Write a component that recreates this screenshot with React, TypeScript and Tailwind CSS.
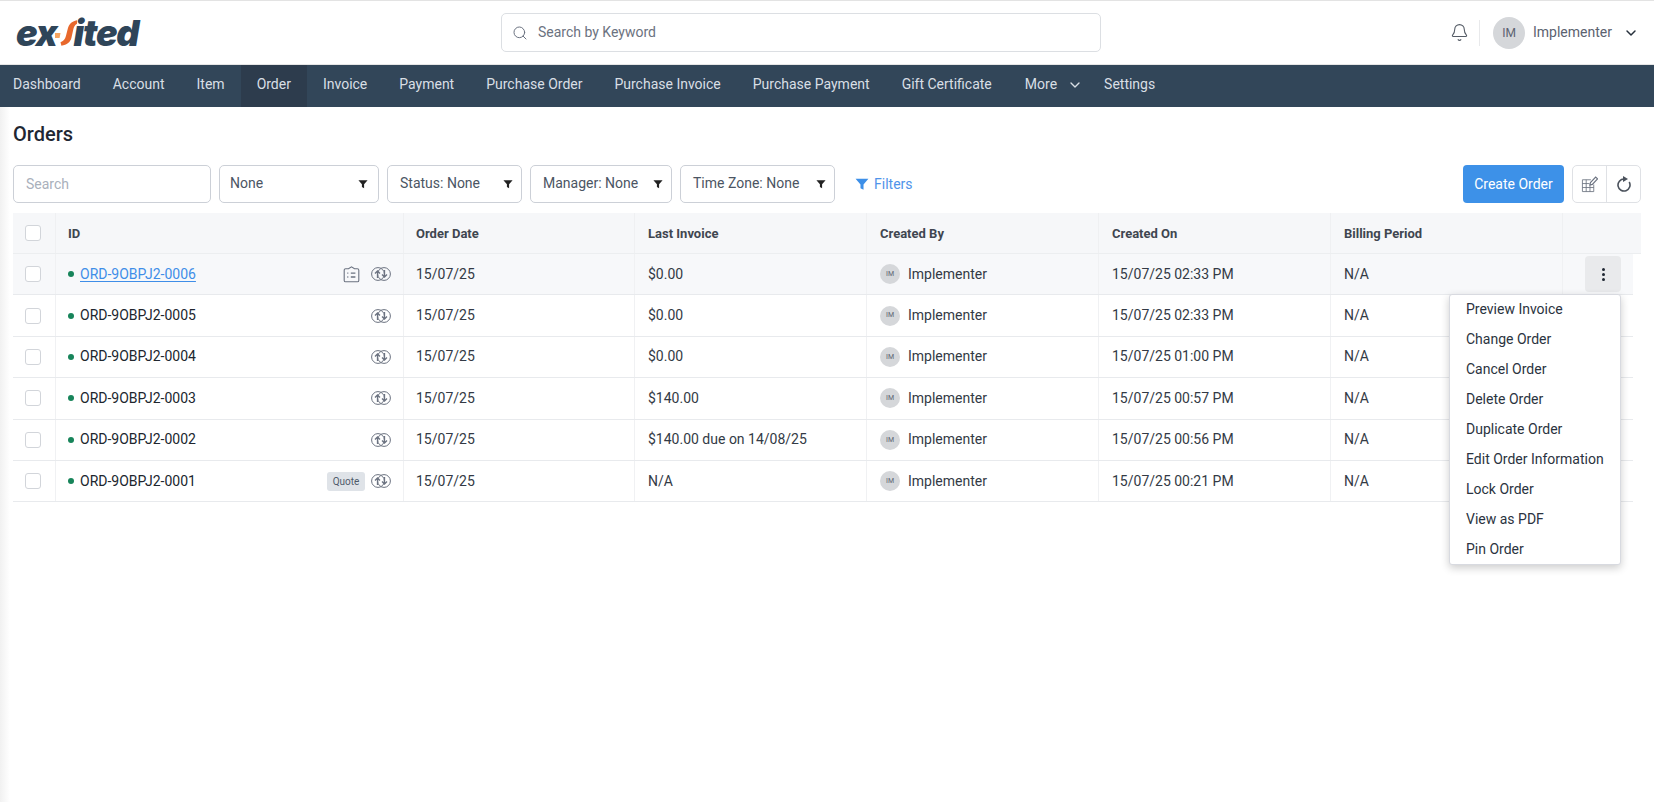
import React from "react";
import { Bell, ChevronDown, Search } from "lucide-react";

const nav = ["Account", "Item"];
const nav2 = ["Invoice", "Payment", "Purchase Order", "Purchase Invoice", "Purchase Payment", "Gift Certificate"];

const rows = [
  { id: "ORD-9OBPJ2-0006", last: "$0.00", on: "15/07/25 02:33 PM", active: true },
  { id: "ORD-9OBPJ2-0005", last: "$0.00", on: "15/07/25 02:33 PM" },
  { id: "ORD-9OBPJ2-0004", last: "$0.00", on: "15/07/25 01:00 PM" },
  { id: "ORD-9OBPJ2-0003", last: "$140.00", on: "15/07/25 00:57 PM" },
  { id: "ORD-9OBPJ2-0002", last: "$140.00 due on 14/08/25", on: "15/07/25 00:56 PM" },
  { id: "ORD-9OBPJ2-0001", last: "N/A", on: "15/07/25 00:21 PM", quote: true },
];

const menu = ["Preview Invoice", "Change Order", "Cancel Order", "Delete Order", "Duplicate Order", "Edit Order Information", "Lock Order", "View as PDF", "Pin Order"];

function Funnel({ className }: { className: string }) {
  return (
    <svg viewBox="0 0 12 12" className={className} fill="currentColor">
      <path d="M0.5 1.5h11L7.3 6.4V11L4.7 9.6V6.4z" />
    </svg>
  );
}

function SyncIcon() {
  return (
    <svg viewBox="0 0 20 16" className="w-[20px] h-[16px] text-[#6b7280]" fill="none" stroke="currentColor" strokeWidth="1">
      <circle cx="7" cy="8" r="6.4" />
      <circle cx="13" cy="8" r="6.4" />
      <path d="M6.500 12V5M4 7.500 6.500 5 9 7.500" strokeWidth="1.300" />
      <path d="M13.500 4V11M11 8.500 13.500 11 16 8.500" strokeWidth="1.300" />
    </svg>
  );
}

function ClipIcon() {
  return (
    <svg viewBox="0 0 17 17" className="w-[17px] h-[17px] text-[#6b7280]" fill="none" stroke="currentColor" strokeWidth="1.1">
      <path d="M5.500 2.800H2.600a1.400 1.400 0 0 0-1.400 1.400v10.200a1.400 1.400 0 0 0 1.400 1.400h11.800a1.400 1.400 0 0 0 1.400-1.400V4.200a1.400 1.400 0 0 0-1.400-1.400h-2.900L8.500 0.800z" />
      <path d="M4.300 7.200h1M4.300 11h1M7.800 7.200h4.600M7.800 11h4.600" strokeWidth="1.3" />
    </svg>
  );
}

function GridEditIcon() {
  return (
    <svg viewBox="0 0 18 18" className="w-[17px] h-[17px] text-[#6b7280]" fill="none" stroke="currentColor" strokeWidth="0.9">
      <path d="M10.500 4H1.500v12.500h12V9M1.500 8h7.500M1.500 12.200h12M5.500 4v12.500M9.500 9v7.500" />
      <path d="M9.500 9.500 10 7l5.500-5.800 2 1.900L12 8.900z" strokeWidth="1.200" />
    </svg>
  );
}

function RefreshIcon() {
  return (
    <svg viewBox="0 0 16 16" className="w-[16px] h-[16px] text-[#4b525c]" fill="none" stroke="currentColor" strokeWidth="1.600">
      <path d="M8 3A6 6 0 1 0 13.200 6" />
      <path d="M7 0 12 3 7 6z" fill="currentColor" stroke="none" />
    </svg>
  );
}

function Logo() {
  return (
    <div className="flex items-center h-[34px] w-[127px] shrink-0 text-[#2f4559] italic font-black text-[36px] leading-none tracking-[-1.2px] [font-family:Inter,'Liberation_Sans',sans-serif]">
      <span>ex</span>
      <svg viewBox="0 0 24 30" className="w-[22px] h-[30px] shrink-0 -ml-[2px] -mr-[3px]">
        <path d="M0 15h6l-1 5.500H0z" fill="#f7a561" />
        <path d="M24 1C18 2 15 6 14 10l-2 8c-1 4-3 6-6 7l1 4c6-1 10-4 11-9l2-9c.5-2 1-4 4-6z" fill="#e8682c" />
      </svg>
      <span>ited</span>
    </div>
  );
}

function Select({ label, w, first }: { label: string; w: string; first?: boolean }) {
  return (
    <div className={`${w} h-[38px] shrink-0 flex items-center justify-between ${first ? "pl-[10px] pr-[10px]" : "pl-[12px] pr-[8px]"} border border-[#ccd0d7] rounded-[5px] text-[14px] text-[#4b5563]`}>
      <span className="-mt-[1px]">{label}</span>
      <Funnel className="w-[10px] h-[10px] text-[#222]" />
    </div>
  );
}

export default function App() {
  return (
    <div className="w-[1654px] h-[802px] overflow-hidden bg-white text-[14px] text-[#333a45] flex flex-col [font-family:Roboto,'Liberation_Sans',sans-serif]">
      <header className="h-[65px] shrink-0 border-t border-t-[#e3e3e3] border-b border-b-[#e6e6e6] flex items-center pl-[16px]">
        <Logo />
        <div className="ml-[358px] w-[600px] shrink-0 h-[39px] border border-[#dcdfe3] rounded-[5px] flex items-center pl-[10px] text-[#6b7280]">
          <Search className="w-[16px] h-[16px] text-[#6b7280]" strokeWidth={1.5} />
          <span className="ml-[10px]">Search by Keyword</span>
        </div>
        <Bell className="ml-[349px] w-[19px] h-[19px] shrink-0 text-[#555c66]" strokeWidth={1.4} />
        <div className="ml-[10px] w-px h-[26px] bg-[#e8e9eb] shrink-0" />
        <div className="ml-[13px] w-[32px] h-[32px] shrink-0 rounded-full bg-[#d5d7da] flex items-center justify-center text-[12px] text-[#5b6270]">IM</div>
        <span className="ml-[8px] text-[#5b6270]">Implementer</span>
        <ChevronDown className="ml-[11px] w-[16px] h-[16px] shrink-0 text-[#26303c]" strokeWidth={2.2} />
      </header>

      <nav className="h-[42px] shrink-0 bg-[#324659] flex items-stretch pl-[13px] text-[#d9dfe5]">
        <div className="flex items-center pr-[16px] pb-[3px]">Dashboard</div>
        {nav.map((n) => (
          <div key={n} className="flex items-center px-[16px] pb-[3px]">{n}</div>
        ))}
        <div className="flex items-center px-[16px] pb-[3px] bg-[#2d3c4d]">Order</div>
        {nav2.map((n) => (
          <div key={n} className="flex items-center px-[16px] pb-[3px]">{n}</div>
        ))}
        <div className="flex items-center pl-[17px] pr-[5px] pb-[3px]">
          More
          <ChevronDown className="ml-[10px] w-[16px] h-[16px]" strokeWidth={2} />
        </div>
        <div className="flex items-center px-[16px] pb-[3px]">Settings</div>
      </nav>

      <main className="flex-1 relative px-[13px] bg-[linear-gradient(to_right,#f1f1f1,#ffffff_10px)]">
        <h1 className="mt-[15px] h-[25px] leading-[24px] text-[20px] font-medium text-[#1f2733]">Orders</h1>

        <div className="mt-[18px] flex items-center">
          <div className="w-[198px] h-[38px] shrink-0 flex items-center pl-[12px] border border-[#ccd0d7] rounded-[5px] text-[#a9b0bb]">Search</div>
          <div className="ml-[8px]"><Select label="None" w="w-[160px]" first /></div>
          <div className="ml-[8px]"><Select label="Status: None" w="w-[135px]" /></div>
          <div className="ml-[8px]"><Select label="Manager: None" w="w-[142px]" /></div>
          <div className="ml-[8px]"><Select label="Time Zone: None" w="w-[155px]" /></div>
          <div className="ml-[20px] flex items-center text-[#4f94ea]">
            <Funnel className="w-[14px] h-[14px] text-[#3d8fe8]" />
            <span className="ml-[5px]">Filters</span>
          </div>
          <div className="ml-auto h-[38px] w-[101px] bg-[#3d91e8] rounded-[4px] text-white flex items-center justify-center">Create Order</div>
          <div className="ml-[8px] h-[38px] w-[69px] border border-[#dfe1e5] rounded-[5px] flex">
            <div className="w-[34px] flex items-center justify-center border-r border-[#dfe1e5]"><GridEditIcon /></div>
            <div className="flex-1 flex items-center justify-center"><RefreshIcon /></div>
          </div>
        </div>

        <div className="mt-[10px] h-[41px] w-[1628px] bg-[#f6f7f9] flex font-bold text-[13px] text-[#3f4650] border-b border-[#eceef0]">
          <div className="w-[43px] border-r border-[#eff0f2] flex items-center pl-[12px]">
            <div className="w-[16px] h-[16px] rounded-[3px] border border-[#d2d5da] bg-white" />
          </div>
          <div className="w-[348px] border-r border-[#eff0f2] flex items-center pl-[12px] pt-[1px]">ID</div>
          {[
            ["Order Date", "w-[231px]", "pl-[12px]"],
            ["Last Invoice", "w-[232px]", "pl-[13px]"],
            ["Created By", "w-[232px]", "pl-[13px]"],
            ["Created On", "w-[232px]", "pl-[13px]"],
            ["Billing Period", "w-[232px]", "pl-[13px]"],
          ].map(([t, w, p]) => (
            <div key={t} className={`${w} ${p} border-r border-[#eff0f2] flex items-center pt-[1px]`}>{t}</div>
          ))}
        </div>

        <div className="w-[1620px]">
          {rows.map((r) => (
            <div key={r.id} className={`h-[41.4px] flex border-b border-[#e8eaed] ${r.active ? "bg-[#f7f8fa]" : "bg-white"}`}>
              <div className="w-[43px] border-r border-[#f0f1f3] flex items-center pl-[12px]">
                <div className="w-[16px] h-[16px] rounded-[3px] border border-[#d2d5da] bg-white" />
              </div>
              <div className="w-[348px] border-r border-[#f0f1f3] flex items-center pl-[12px] pr-[12px]">
                <span className="w-[6px] h-[6px] rounded-full bg-[#17845a] shrink-0" />
                <span className={`ml-[6px] ${r.active ? "text-[#3f8ee8] underline underline-offset-2" : "text-[#20262e]"}`}>{r.id}</span>
                <div className="ml-auto flex items-center">
                  {r.quote && <span className="w-[38px] h-[19px] rounded-[3px] bg-[#dfe3e8] text-[10px] text-[#4f5b6b] flex items-center justify-center mr-[6px]">Quote</span>}
                  {r.active && <span className="mr-[11px] flex"><ClipIcon /></span>}
                  <SyncIcon />
                </div>
              </div>
              <div className="w-[231px] border-r border-[#f0f1f3] flex items-center pl-[12px]">15/07/25</div>
              <div className="w-[232px] border-r border-[#f0f1f3] flex items-center pl-[13px]">{r.last}</div>
              <div className="w-[232px] border-r border-[#f0f1f3] flex items-center pl-[13px]">
                <span className="w-[20px] h-[20px] rounded-full bg-[#d5d7da] text-[7px] text-[#5b6270] flex items-center justify-center">IM</span>
                <span className="ml-[8px]">Implementer</span>
              </div>
              <div className="w-[232px] border-r border-[#f0f1f3] flex items-center pl-[13px]">{r.on}</div>
              <div className="w-[232px] border-r border-[#f0f1f3] flex items-center pl-[13px]">N/A</div>
              <div className="flex-1 flex items-center pl-[22px]">
                {r.active && (
                  <div className="w-[36px] h-[36px] rounded-[4px] bg-[#e9eaec] flex flex-col items-center justify-center gap-[2px]">
                    <span className="w-[3px] h-[3px] rounded-full bg-[#1f2733]" />
                    <span className="w-[3px] h-[3px] rounded-full bg-[#1f2733]" />
                    <span className="w-[3px] h-[3px] rounded-full bg-[#1f2733]" />
                  </div>
                )}
              </div>
            </div>
          ))}
        </div>

        <div className="absolute left-[1449px] top-[187px] w-[172px] h-[271px] bg-white rounded-[3px] border border-[#d8dae0] shadow-[0_3px_8px_rgba(0,0,0,0.2)] text-[#2b3340]">
          {menu.map((m) => (
            <div key={m} className="h-[30px] flex items-center pl-[16px] pb-[2px]">{m}</div>
          ))}
        </div>
      </main>
    </div>
  );
}
